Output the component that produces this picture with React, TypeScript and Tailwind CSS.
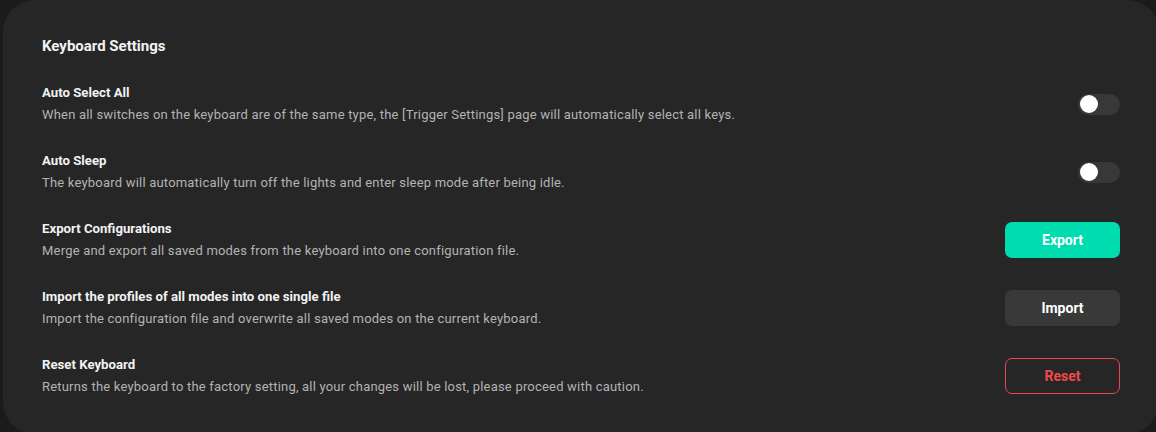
import React from "react";

type Row = {
  title: string;
  desc: string;
  kind: "toggle" | "export" | "import" | "reset";
};

const rows: Row[] = [
  {
    title: "Auto Select All",
    desc: "When all switches on the keyboard are of the same type, the [Trigger Settings] page will automatically select all keys.",
    kind: "toggle",
  },
  {
    title: "Auto Sleep",
    desc: "The keyboard will automatically turn off the lights and enter sleep mode after being idle.",
    kind: "toggle",
  },
  {
    title: "Export Configurations",
    desc: "Merge and export all saved modes from the keyboard into one configuration file.",
    kind: "export",
  },
  {
    title: "Import the profiles of all modes into one single file",
    desc: "Import the configuration file and overwrite all saved modes on the current keyboard.",
    kind: "import",
  },
  {
    title: "Reset Keyboard",
    desc: "Returns the keyboard to the factory setting, all your changes will be lost, please proceed with caution.",
    kind: "reset",
  },
];

function Toggle() {
  return (
    <div className="w-[42px] h-[21px] rounded-full bg-[#383838] flex items-center px-[2px]">
      <div className="w-[18px] h-[18px] rounded-full bg-white" />
    </div>
  );
}

function Action({ kind }: { kind: Row["kind"] }) {
  if (kind === "toggle") return <Toggle />;
  if (kind === "export")
    return (
      <button className="w-[115px] h-[36px] rounded-[7px] bg-[#00dbb0] text-white text-[14px] font-bold">
        Export
      </button>
    );
  if (kind === "import")
    return (
      <button className="w-[115px] h-[36px] rounded-[7px] bg-[#393939] text-white text-[14px] font-bold">
        Import
      </button>
    );
  return (
    <button className="w-[115px] h-[36px] rounded-[7px] border border-[#e5484d] text-[#f0484e] text-[14px] font-bold">
      Reset
    </button>
  );
}

export default function App() {
  return (
    <div className="w-[1156px] h-[432px] bg-[#1b1b1b] overflow-hidden font-['Roboto',sans-serif]">
      <div className="ml-[3px] w-[1156px] h-[434px] rounded-[32px] bg-[#262626] pl-[39px] pr-[39px] pt-[34px]">
        <h1 className="text-[15px] leading-[24px] font-bold text-[#f2f2f2]">Keyboard Settings</h1>
        <div className="mt-[25px] flex flex-col gap-[26px]">
          {rows.map((r) => (
            <div key={r.title} className="flex items-center justify-between h-[42px]">
              <div>
                <div className="text-[13.2px] leading-[20px] font-bold text-[#f2f2f2]">{r.title}</div>
                <div className="mt-[2px] text-[13px] leading-[20px] tracking-[0.2px] text-[#b3b3b3]">{r.desc}</div>
              </div>
              <Action kind={r.kind} />
            </div>
          ))}
        </div>
      </div>
    </div>
  );
}
